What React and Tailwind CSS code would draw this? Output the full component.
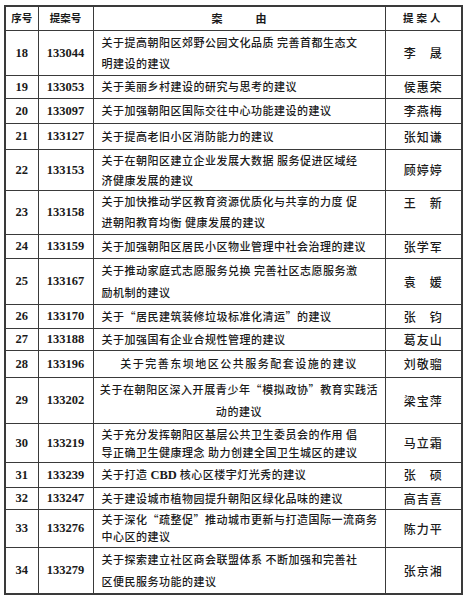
import React from "react";

const rows = [
  { n: 18, id: "133044", lines: ["关于提高朝阳区郊野公园文化品质 完善首都生态文", "明建设的建议"], name: "李　晟", h: 45, lh: 21 },
  { n: 19, id: "133053", lines: ["关于美丽乡村建设的研究与思考的建议"], name: "侯惠荣", h: 23 },
  { n: 20, id: "133097", lines: ["关于加强朝阳区国际交往中心功能建设的建议"], name: "李燕梅", h: 25 },
  { n: 21, id: "133127", lines: ["关于提高老旧小区消防能力的建议"], name: "张知谦", h: 26 },
  { n: 22, id: "133153", lines: ["关于在朝阳区建立企业发展大数据 服务促进区域经", "济健康发展的建议"], name: "顾婷婷", h: 41, lh: 20 },
  { n: 23, id: "133158", lines: ["关于加快推动学区教育资源优质化与共享的力度 促", "进朝阳教育均衡 健康发展的建议"], name: "王　新", h: 44, lh: 21, nameTop: true },
  { n: 24, id: "133159", lines: ["关于加强朝阳区居民小区物业管理中社会治理的建议"], name: "张学军", h: 24 },
  { n: 25, id: "133167", lines: ["关于推动家庭式志愿服务兑换 完善社区志愿服务激", "励机制的建议"], name: "袁　媛", h: 46, lh: 22 },
  { n: 26, id: "133170", lines: ["关于“居民建筑装修垃圾标准化清运”的建议"], name: "张　钧", h: 24 },
  { n: 27, id: "133188", lines: ["关于加强国有企业合规性管理的建议"], name: "葛友山", h: 22 },
  { n: 28, id: "133196", lines: ["关于完善东坝地区公共服务配套设施的建议"], name: "刘敬骝", h: 27, center: true, wide: "tracking-[1.5px]" },
  { n: 29, id: "133202", lines: ["关于在朝阳区深入开展青少年“模拟政协”教育实践活", "动的建议"], name: "梁宝萍", h: 46, lh: 22, center: true, wide: "tracking-[0.6px]" },
  { n: 30, id: "133219", lines: ["关于充分发挥朝阳区基层公共卫生委员会的作用 倡", "导正确卫生健康理念 助力创建全国卫生城区的建议"], name: "马立霜", h: 39, lh: 18 },
  { n: 31, id: "133239", lines: ["关于打造 ", "CBD", " 核心区楼宇灯光秀的建议"], cbd: true, name: "张　硕", h: 25 },
  { n: 32, id: "133247", lines: ["关于建设城市植物园提升朝阳区绿化品味的建议"], name: "高吉喜", h: 22 },
  { n: 33, id: "133276", lines: ["关于深化“疏整促”推动城市更新与打造国际一流商务", "中心区的建议"], name: "陈力平", h: 38, lh: 17 },
  { n: 34, id: "133279", lines: ["关于探索建立社区商会联盟体系 不断加强和完善社", "区便民服务功能的建议"], name: "张京湘", h: 47, lh: 22 },
];

const cjk = "font-['Noto_Sans_CJK_SC','Noto_Sans',sans-serif]";
const serif = "font-['Liberation_Serif','Noto_Sans_CJK_SC',serif]";
const cell = "border border-[#3a3a3a] p-0";

export default function App() {
  return (
    <div className="w-[465px] h-[600px] bg-white pl-[4px] pt-[5px]">
      <table className="w-[457px] table-fixed border-collapse border-2 border-[#3a3a3a] text-[#1a1a1a]">
        <colgroup>
          <col className="w-[33px]" />
          <col className="w-[55px]" />
          <col className="w-[292px]" />
          <col className="w-[77px]" />
        </colgroup>
        <thead>
          <tr className="h-[24px]">
            <th className={`${cell} ${cjk} text-[10.5px] leading-[14px] font-bold text-center`}>序号</th>
            <th className={`${cell} ${cjk} text-[10.5px] leading-[14px] font-bold text-center`}>提案号</th>
            <th className={`${cell} ${cjk} text-[11px] leading-[14px] font-bold text-center`}>
              <span className="whitespace-pre">案　　　由</span>
            </th>
            <th className={`${cell} ${cjk} text-[10.5px] leading-[14px] font-bold text-center tracking-[3px]`}>提案人</th>
          </tr>
        </thead>
        <tbody>
          {rows.map((r) => (
            <tr key={r.n} style={{ height: r.h }}>
              <td className={`${cell} ${serif} text-[12.5px] leading-[14px] font-bold text-center align-middle`}>{r.n}</td>
              <td className={`${cell} ${serif} text-[12.5px] leading-[14px] font-bold text-center align-middle`}>{r.id}</td>
              <td
                className={`${cell} ${cjk} text-[11px] font-medium ${r.wide || "tracking-[0.5px]"} align-middle whitespace-pre ${
                  r.center ? "text-center" : "text-left pl-[8px]"
                }`}
                style={{ lineHeight: r.lh ? `${r.lh}px` : "15px" }}
              >
                {r.cbd ? (
                  <div>
                    {r.lines[0]}
                    <span className={`${serif} font-bold text-[12.5px] tracking-normal`}>{r.lines[1]}</span>
                    {r.lines[2]}
                  </div>
                ) : (
                  r.lines.map((l, i) => <div key={i}>{l}</div>)
                )}
              </td>
              <td
                className={`${cell} ${cjk} text-[12px] leading-[15px] font-medium tracking-[1px] text-center ${
                  r.nameTop ? "align-top pt-[4px]" : "align-middle"
                }`}
              >
                {r.name}
              </td>
            </tr>
          ))}
        </tbody>
      </table>
    </div>
  );
}
